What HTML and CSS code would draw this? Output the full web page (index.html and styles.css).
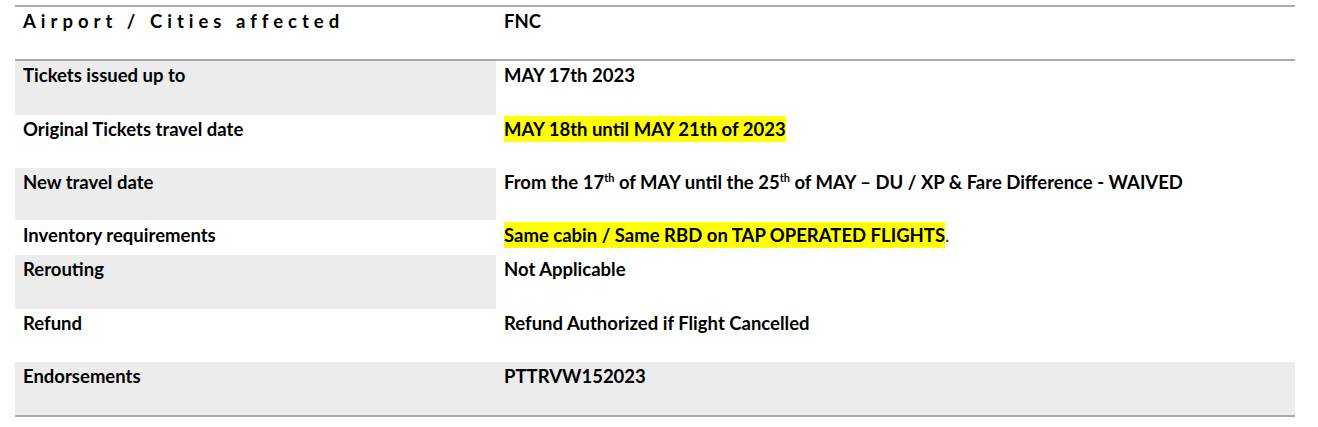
FILE: index.html
```html
<!DOCTYPE html>
<html>
<head>
<meta charset="utf-8">
<link rel="stylesheet" href="styles.css">
</head>
<body>
<table class="info">
  <colgroup><col class="c-label"><col class="c-value"></colgroup>
  <tr class="r-head">
    <td class="label spaced">Airport / Cities affected</td>
    <td class="value">FNC</td>
  </tr>
  <tr class="r-54">
    <td class="label shade">Tickets issued up to</td>
    <td class="value">MAY 17th 2023</td>
  </tr>
  <tr class="r-53">
    <td class="label">Original Tickets travel date</td>
    <td class="value"><span class="hl">MAY 18th until MAY 21th of 2023</span></td>
  </tr>
  <tr class="r-52">
    <td class="label shade">New travel date</td>
    <td class="value">From the 17<sup>th</sup> of MAY until the 25<sup>th</sup> of MAY – DU / XP &amp; Fare Difference - WAIVED</td>
  </tr>
  <tr class="r-short">
    <td class="label">Inventory requirements</td>
    <td class="value"><span class="hl">Same cabin / Same RBD on TAP OPERATED FLIGHTS</span><span class="dot">.</span></td>
  </tr>
  <tr class="r-54">
    <td class="label shade">Rerouting</td>
    <td class="value">Not Applicable</td>
  </tr>
  <tr class="r-53">
    <td class="label">Refund</td>
    <td class="value">Refund Authorized if Flight Cancelled</td>
  </tr>
  <tr class="r-53">
    <td class="label shade">Endorsements</td>
    <td class="value shade">PTTRVW152023</td>
  </tr>
</table>
</body>
</html>
```
FILE: styles.css
```css
html, body {
  margin: 0;
  padding: 0;
  background: #ffffff;
}
body {
  padding: 5px 0 0 15px;
  font-family: Lato, "Liberation Sans", sans-serif;
  font-weight: 700;
  font-size: 18.5px;
  color: #000;
}
.info {
  border-collapse: collapse;
  width: 1280px;
  table-layout: fixed;
  border-top: 2px solid #aaaaaa;
  border-bottom: 2px solid #aaaaaa;
}
.c-label { width: 481px; }
.c-value { width: 799px; }
.info td {
  vertical-align: top;
  padding: 1px 0 0 8px;
  line-height: 26px;
  white-space: nowrap;
}
.r-head { border-bottom: 2px solid #aaaaaa; }
.r-head td { height: 51px; }
.r-54 td { height: 53px; }
.r-53 td { height: 52px; }
.r-52 td { height: 51px; }
.r-short td { height: 33px; padding-top: 2px; }
.shade { background: #ececec; }
.spaced { letter-spacing: 5px; }
.hl { background: #ffff00; padding: 2px 0; }
.dot { font-weight: 400; color: #333; }
sup { font-size: 11px; line-height: 0; vertical-align: 7px; }
```
